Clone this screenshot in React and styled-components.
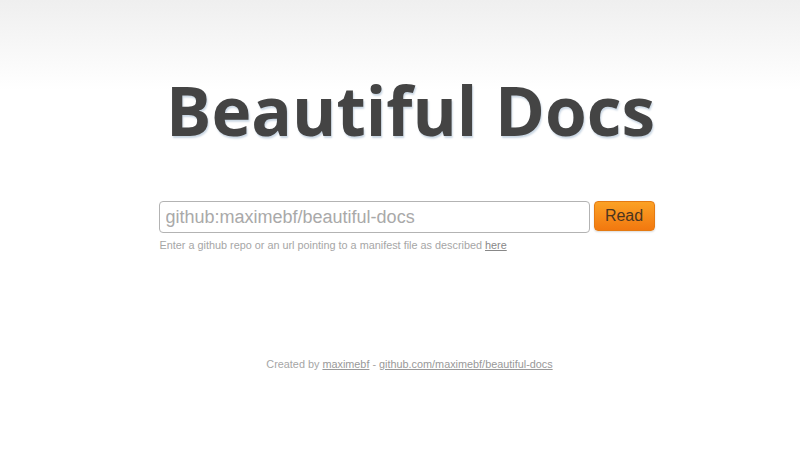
import React from "react";
import styled, { createGlobalStyle } from "styled-components";

const GlobalStyle = createGlobalStyle`
  html, body {
    margin: 0;
    padding: 0;
    background: #fff;
  }
  body {
    font-family: "Liberation Sans", Arial, sans-serif;
  }
`;

function App() {
  return (
    <Page>
      <GlobalStyle />
      <Header>
        <Title>Beautiful Docs</Title>
      </Header>
      <Form>
        <Row>
          <UrlInput placeholder="github:maximebf/beautiful-docs" />
          <ReadButton>Read</ReadButton>
        </Row>
        <Hint>
          Enter a github repo or an url pointing to a manifest file as described{" "}
          <a href="#">here</a>
        </Hint>
      </Form>
      <Footer>
        Created by <a href="#">maximebf</a> -{" "}
        <a href="#">github.com/maximebf/beautiful-docs</a>
      </Footer>
    </Page>
  );
}

export default App;

const Page = styled.div`
  box-sizing: border-box;
  min-height: 466px;
  padding-left: 13px;
  background: linear-gradient(to bottom, #efefef 0px, #ffffff 90px, #ffffff 100%);
  display: flex;
  flex-direction: column;
  align-items: center;
`;

const Header = styled.div`
  padding-top: 65px;
  padding-left: 8px;
`;

const Title = styled.h1`
  margin: 0;
  font-family: "Open Sans", sans-serif;
  font-weight: 700;
  font-size: 67.5px;
  line-height: 90px;
  color: #444;
  text-shadow: 1px 2px 2px #c9d6e3;
`;

const Form = styled.div`
  margin-top: 46px;
  width: 496px;
`;

const Row = styled.div`
  display: flex;
  align-items: flex-start;
  gap: 4px;
`;

const UrlInput = styled.input`
  box-sizing: border-box;
  width: 431px;
  height: 32px;
  padding: 0 6px;
  border: 1px solid #b3b3b3;
  border-radius: 4px;
  font-family: "Liberation Sans", Arial, sans-serif;
  font-size: 18px;
  color: #444;
  background: #fff;
  outline: none;
  &::placeholder {
    color: #a9a9a9;
  }
`;

const ReadButton = styled.button`
  box-sizing: border-box;
  width: 61px;
  height: 30px;
  border: 1px solid #e47a12;
  border-radius: 4px;
  background: linear-gradient(to bottom, #fba125, #f2780f);
  color: #4a3520;
  font-family: "Liberation Sans", Arial, sans-serif;
  font-size: 16px;
  cursor: pointer;
  box-shadow: 0 1px 2px rgba(0, 0, 0, 0.15);
`;

const Hint = styled.p`
  margin: 6px 0 0 1px;
  font-size: 10.85px;
  color: #a6a6a6;
  a {
    color: #888;
  }
`;

const Footer = styled.div`
  margin-top: 107px;
  padding-left: 6px;
  font-size: 10.85px;
  color: #a6a6a6;
  a {
    color: #999;
  }
`;
